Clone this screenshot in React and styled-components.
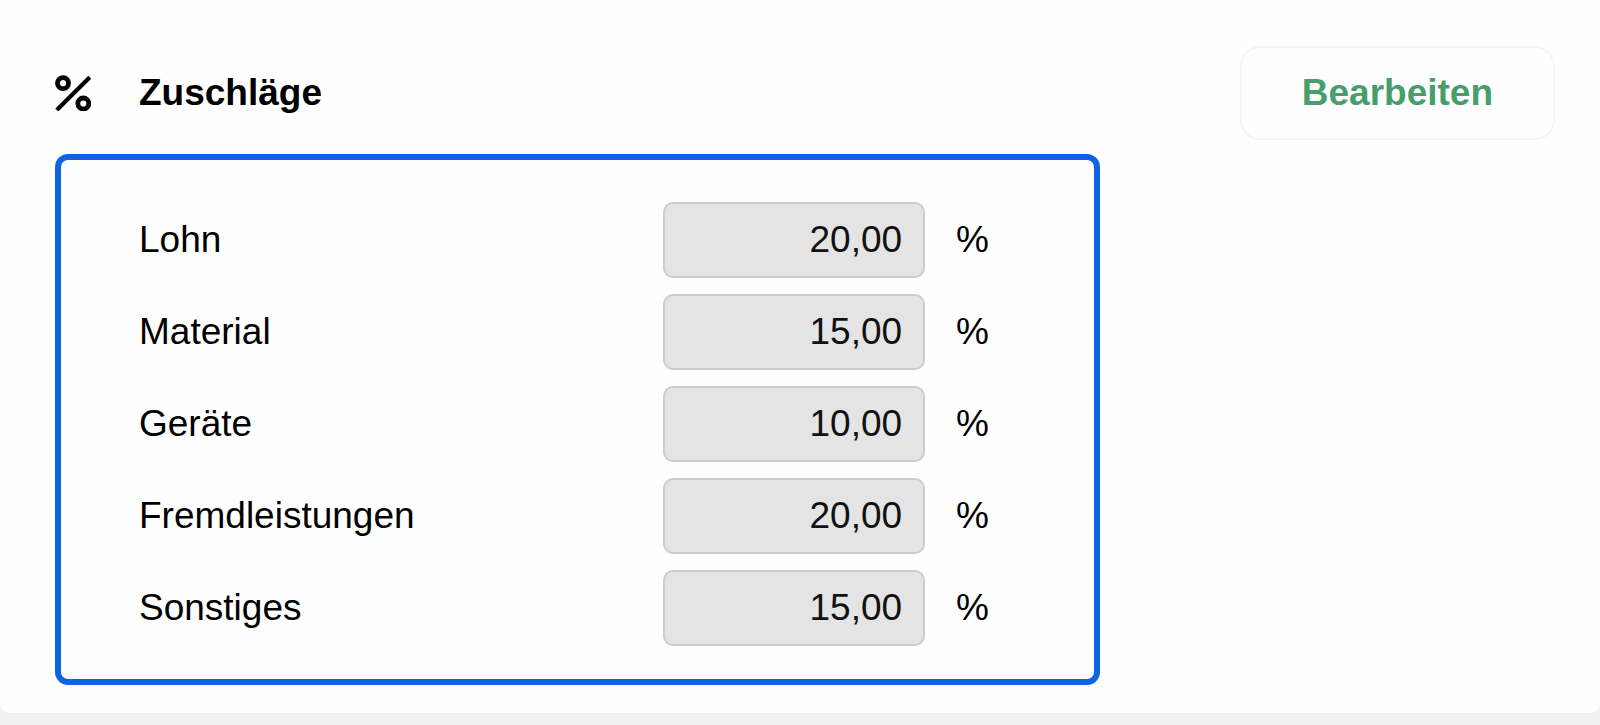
import { useState } from "react";
import styled, { createGlobalStyle } from "styled-components";

const GlobalStyle = createGlobalStyle`
  * {
    box-sizing: border-box;
  }

  body {
    margin: 0;
    background-color: #f0f0f0;
    color: #000;
    font-family: "Liberation Sans", Arial, Helvetica, sans-serif;
    font-size: 37px;
    line-height: 44px;
  }
`;

const Card = styled.section`
  padding: 46px 45px 28px 55px;
  background-color: #fefefe;
  border-radius: 0 0 10px 10px;
`;

const Header = styled.header`
  display: flex;
  align-items: center;
  gap: 48px;
  margin-bottom: 14px;
`;

const PercentIcon = styled.svg`
  flex: none;
  width: 36px;
  height: 36px;
  fill: none;
  stroke: currentColor;
`;

const Title = styled.h2`
  flex: 1;
  margin: 0;
  font-size: 37px;
  font-weight: 700;
`;

const EditButton = styled.button`
  padding: 23px 60px;
  border: 2px solid #f5f5f5;
  border-radius: 20px;
  background-color: #fefefe;
  color: #479e6b;
  font: inherit;
  font-weight: 700;
  cursor: pointer;
`;

const Surcharges = styled.div`
  display: flex;
  flex-direction: column;
  gap: 16px;
  width: 100%;
  max-width: 1045px;
  padding: 42px 105px 33px 78px;
  border: 6px solid #0c64e4;
  border-radius: 13px;
`;

const Row = styled.div`
  display: flex;
  align-items: center;
`;

const Label = styled.label`
  flex: 1;
`;

const ValueInput = styled.input`
  width: 262px;
  height: 76px;
  padding: 0 21px;
  border: 2px solid #cccccc;
  border-radius: 10px;
  background-color: ${(props) => (props.readOnly ? "#e4e4e4" : "#ffffff")};
  color: #111;
  font: inherit;
  text-align: right;
`;

const Unit = styled.span`
  margin-left: 31px;
`;

const fields = [
  { id: "lohn", label: "Lohn" },
  { id: "material", label: "Material" },
  { id: "geraete", label: "Geräte" },
  { id: "fremdleistungen", label: "Fremdleistungen" },
  { id: "sonstiges", label: "Sonstiges" },
];

const App = () => {
  const [isEditing, setIsEditing] = useState(false);
  const [values, setValues] = useState({
    lohn: "20,00",
    material: "15,00",
    geraete: "10,00",
    fremdleistungen: "20,00",
    sonstiges: "15,00",
  });

  const handleChange = (e) => {
    const { name, value } = e.target;
    setValues((prev) => ({ ...prev, [name]: value }));
  };

  return (
    <>
      <GlobalStyle />
      <Card>
        <Header>
          <PercentIcon viewBox="0 0 36 36" aria-hidden="true">
            <circle cx="8" cy="8.2" r="5.5" strokeWidth="4.8" />
            <circle cx="28.3" cy="28.5" r="5.5" strokeWidth="4.8" />
            <path d="M1.8 35 34.8 2.2" strokeWidth="4.2" />
          </PercentIcon>
          <Title>Zuschläge</Title>
          <EditButton type="button" onClick={() => setIsEditing(!isEditing)}>
            Bearbeiten
          </EditButton>
        </Header>
        <Surcharges>
          {fields.map((field) => (
            <Row key={field.id}>
              <Label htmlFor={field.id}>{field.label}</Label>
              <ValueInput
                type="text"
                inputMode="decimal"
                id={field.id}
                name={field.id}
                value={values[field.id]}
                onChange={handleChange}
                readOnly={!isEditing}
              />
              <Unit>%</Unit>
            </Row>
          ))}
        </Surcharges>
      </Card>
    </>
  );
};

export default App;
